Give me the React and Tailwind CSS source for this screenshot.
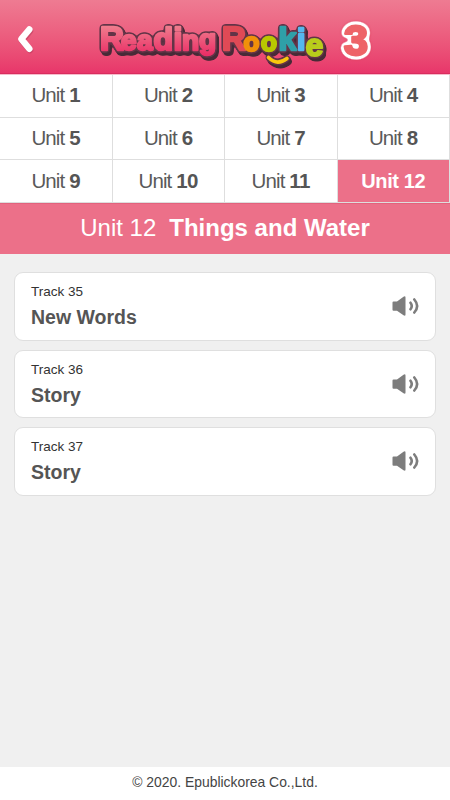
const units = Array.from({ length: 12 }, (_, i) => i + 1);

const tracks = [
  { no: 35, title: "New Words" },
  { no: 36, title: "Story" },
  { no: 37, title: "Story" },
];

const rookie = [
  { ch: "R", x: 222, y: 50, size: 33, color: "#e04a56" },
  { ch: "o", x: 243.5, y: 50.5, size: 26, color: "#f0900a" },
  { ch: "o", x: 261, y: 50.5, size: 26, color: "#b9c800" },
  { ch: "k", x: 278.5, y: 50, size: 32, color: "#2fa0a8" },
  { ch: "i", x: 297, y: 50, size: 30, color: "#55b8ee" },
];

function Logo() {
  return (
    <svg
      viewBox="0 0 450 74"
      className="h-[74px] w-[450px]"
      fontFamily="'Liberation Sans', Arial, sans-serif"
      fontWeight="700"
      strokeLinejoin="round"
      strokeLinecap="round"
    >
      <defs>
        <linearGradient id="pink" gradientUnits="userSpaceOnUse" x1="0" y1="25" x2="0" y2="55">
          <stop offset="0" stopColor="#f0808f" />
          <stop offset="1" stopColor="#ea2e66" />
        </linearGradient>
        {/* dark rounded outline with a solid shadow to the lower right */}
        <filter id="outline" filterUnits="userSpaceOnUse" x="90" y="10" width="245" height="64" colorInterpolationFilters="sRGB">
          <feGaussianBlur in="SourceAlpha" stdDeviation="1.6" />
          <feComponentTransfer result="fat">
            <feFuncA type="linear" slope="8" intercept="-.6" />
          </feComponentTransfer>
          <feFlood floodColor="#633447" />
          <feComposite in2="fat" operator="in" result="edge" />
          <feOffset in="fat" dx="1.2" dy="1.2" result="s1" />
          <feOffset in="fat" dx="2.2" dy="2.5" result="s2" />
          <feMerge result="shadow">
            <feMergeNode in="s2" />
            <feMergeNode in="s1" />
          </feMerge>
          <feFlood floodColor="#482a37" />
          <feComposite in2="shadow" operator="in" result="depth" />
          <feMerge>
            <feMergeNode in="depth" />
            <feMergeNode in="edge" />
            <feMergeNode in="SourceGraphic" />
          </feMerge>
        </filter>
        <filter id="halo" filterUnits="userSpaceOnUse" x="330" y="8" width="54" height="64" colorInterpolationFilters="sRGB">
          <feGaussianBlur in="SourceAlpha" stdDeviation="2.5" />
          <feComponentTransfer result="fat">
            <feFuncA type="linear" slope="12" intercept="-.6" />
          </feComponentTransfer>
          <feFlood floodColor="#fff" />
          <feComposite in2="fat" operator="in" result="white" />
          <feGaussianBlur in="fat" stdDeviation="1" result="soft" />
          <feFlood floodColor="#e0405a" />
          <feComposite in2="soft" operator="in" result="glow" />
          <feMerge>
            <feMergeNode in="glow" />
            <feMergeNode in="white" />
            <feMergeNode in="SourceGraphic" />
          </feMerge>
        </filter>
      </defs>

      <path d="M30 31 22 40.500 30 50" fill="none" stroke="#a82f50" strokeOpacity=".4" strokeWidth="6.500" />
      <path d="M29.300 29.500 21.300 39 29.300 48.800" fill="none" stroke="#fff" strokeWidth="6.500" />

      <g filter="url(#outline)">
        <text
          x="100 121 137 153.500 173.500 182 199"
          y="50 50 50 50 50 50 49"
          fontSize="28"
          fill="url(#pink)"
          stroke="url(#pink)"
          strokeWidth="2.400"
        >
          <tspan fontSize="33">R</tspan>ea<tspan fontSize="32">di</tspan>ng
        </text>
        <text strokeWidth="2.400">
          {rookie.map((l) => (
            <tspan key={l.x} x={l.x} y={l.y} fontSize={l.size} fill={l.color} stroke={l.color}>{l.ch}</tspan>
          ))}
        </text>
        <text x="305.500" y="56" fontSize="32" fill="#b9cc1c" stroke="#b9cc1c" strokeWidth="2">e</text>
        <path d="M268.500 57.500q8.500 8.500 18.500 1" fill="none" stroke="#f9c80e" strokeWidth="3.600" />
      </g>

      <text x="344" y="54.500" fontSize="43" fill="#ee6468" stroke="#ee6468" strokeWidth="2.800" filter="url(#halo)">3</text>
    </svg>
  );
}

function SpeakerIcon() {
  return (
    <svg viewBox="0 0 27 20" className="h-5 w-[27px]" fill="#7d7d7d">
      <path d="M1.500 5.500H5L11.500.700Q13.500-.500 13.500 1.500V18.500Q13.500 20.500 11.500 19.300L5 14.800H1.500Q.5 14.800.5 13.800V6.500Q.5 5.500 1.500 5.500Z" />
      <path d="M18.500 6.700Q21 10 18.500 13.300M22.300 3.500Q28 10 22.300 16.500" fill="none" stroke="#7d7d7d" strokeWidth="2.600" strokeLinecap="round" />
    </svg>
  );
}

function App() {
  return (
    <div className="flex h-[800px] w-[450px] flex-col overflow-hidden bg-[#f0f0f0] font-['Liberation_Sans',Arial,sans-serif]">
      <header className="h-[74px] shrink-0 border-b border-[#d92c5e] bg-linear-to-b from-[#ee7b92] to-[#e8366a]">
        <Logo />
      </header>

      <nav className="grid h-[129px] shrink-0 grid-cols-4 grid-rows-3 border-t border-[#f6bccb] bg-white">
        {units.map((n) => (
          <div
            key={n}
            className={
              n === 12
                ? "flex items-center justify-center border-r border-b border-[#dedede] bg-[#ec7089] text-[20px] font-bold tracking-[-0.4px] text-white"
                : "flex items-center justify-center border-r border-b border-[#dedede] text-[20.5px] tracking-[-0.9px] text-[#5a5a5a]"
            }
          >
            {n === 12 ? "Unit 12" : <span>Unit <b className="tracking-[-0.5px] text-[#555]">{n}</b></span>}
          </div>
        ))}
      </nav>

      <h1 className="flex h-[51px] shrink-0 items-center justify-center border-t border-[#e2627d] bg-[#ec7089] pb-0.5 text-2xl text-white">
        Unit 12<b className="ml-[13px]">Things and Water</b>
      </h1>

      <main className="flex flex-1 flex-col gap-[9px] px-3.5 pt-[18px]">
        {tracks.map((t) => (
          <div key={t.no} className="flex h-[68.5px] items-center justify-between rounded-[9px] border border-[#dfdfdf] bg-white pr-4 pl-4">
            <div>
              <p className="text-[13.5px] leading-[18px] text-[#333]">Track {t.no}</p>
              <p className="mt-1 text-[19.5px] leading-6 font-bold text-[#555]">{t.title}</p>
            </div>
            <SpeakerIcon />
          </div>
        ))}
      </main>

      <footer className="flex h-[33px] shrink-0 items-center justify-center bg-white pb-0.5 text-[13.9px] text-[#444]">
        © 2020. Epublickorea Co.,Ltd.
      </footer>
    </div>
  );
}

export default App;
